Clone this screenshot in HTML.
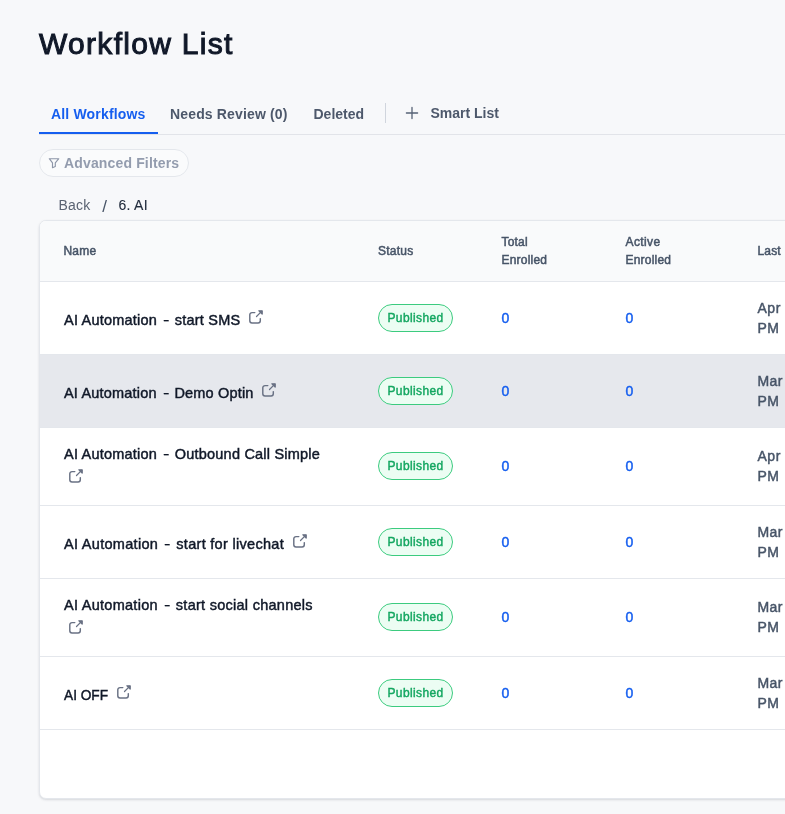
<!DOCTYPE html>
<html lang="en">
<head>
<meta charset="utf-8">
<title>Workflow List</title>
<style>
*{box-sizing:border-box;margin:0;padding:0}
html,body{width:785px;height:814px;overflow:hidden;background:#f7f8fa;font-family:"Liberation Sans",Arial,sans-serif;color:#101828}
body{position:relative}
#root{position:absolute;left:0;top:0;width:785px;height:814px;will-change:transform;transform:translateZ(0)}
.abs{position:absolute;white-space:nowrap}
h1{position:absolute;left:39px;top:26px;font-size:30px;line-height:36px;font-weight:400;color:#101828;letter-spacing:1.3px;-webkit-text-stroke:1px #101828;white-space:nowrap}
.tabs-line{position:absolute;left:39px;top:134px;width:746px;height:1px;background:#e2e4e9}
.tab-ul{position:absolute;left:39px;top:132px;width:119px;height:2px;background:#155eef}
.tab{position:absolute;top:104px;font-size:14px;line-height:20px;font-weight:700;color:#4d586b;white-space:nowrap}
.tab.active{color:#155eef}
.vsep{position:absolute;left:385px;top:103px;width:1px;height:20px;background:#d0d5dd}
.filter{position:absolute;left:39px;top:149px;width:150px;height:28px;border:1px solid #e4e7ec;border-radius:14px;background:#fafbfc}
.filter span{position:absolute;left:24px;top:3px;font-size:14px;line-height:20px;font-weight:700;color:#939cae;white-space:nowrap;letter-spacing:0.15px}
.filter svg{position:absolute;left:7px;top:6px}
.crumb{position:absolute;top:195px;font-size:14px;line-height:20px;color:#5a6372;white-space:nowrap}
.card{position:absolute;left:39px;top:220px;width:800px;height:579px;background:#fff;border:1px solid #e4e7ec;border-radius:7px;box-shadow:0 1px 3px rgba(16,24,40,.09),0 1px 2px rgba(16,24,40,.06);overflow:hidden}
.thead{position:absolute;left:0;top:0;width:100%;height:61px;background:#f9fafb;border-bottom:1px solid #e4e7ec}
.th{position:absolute;font-size:12px;line-height:18px;color:#475467;white-space:nowrap;-webkit-text-stroke:0.5px #475467}
.th span{display:block}
.row{position:absolute;left:0;width:100%;border-bottom:1px solid #e4e7ec}
.row.hl{background:#e6e8ed}
.name{position:absolute;left:24px;font-size:14.5px;line-height:20px;color:#101828;white-space:nowrap;-webkit-text-stroke:0.45px #101828}
.hy{display:inline-block;-webkit-text-stroke:0.15px #101828;transform:scaleX(1.35);margin:0 1.5px 0 2.8px}
.ext{position:absolute}
.badge{position:absolute;left:338px;width:75px;height:28px;border:1px solid #3ccb7f;border-radius:14px;background:#ecfdf3;color:#13a660;font-size:12px;line-height:26px;text-align:center;font-weight:400;-webkit-text-stroke:0.4px #13a660;letter-spacing:0.38px}
.num{position:absolute;font-size:14px;line-height:20px;color:#155eef;-webkit-text-stroke:0.45px #155eef}
.date{position:absolute;left:717.400px;font-size:14px;line-height:20px;color:#475467;white-space:nowrap;-webkit-text-stroke:0.45px #475467}
.date span{display:block}
</style>
</head>
<body>
<div id="root">
<h1>Workflow List</h1>
<div class="tab active" style="left:51px;letter-spacing:0.17px">All Workflows</div>
<div class="tab" style="left:170px;letter-spacing:0.15px">Needs Review (0)</div>
<div class="tab" style="left:313.500px">Deleted</div>
<div class="vsep"></div>
<svg class="abs" style="left:404px;top:105px" width="16" height="16" viewBox="0 0 16 16"><path d="M8 2.400v11.200M2.400 8h11.200" stroke="#566175" stroke-width="1.300" fill="none" stroke-linecap="round"/></svg>
<div class="tab" style="left:430.500px;top:103px">Smart List</div>
<div class="tabs-line"></div>
<div class="tab-ul"></div>
<div class="filter"><svg width="14" height="14" viewBox="0 0 14 14"><path d="M2.300 2.700H11.800L8.300 6.900V10.500L5.500 11.700V6.900Z" stroke="#8d96a8" stroke-width="1.150" fill="none" stroke-linejoin="round"/></svg><span>Advanced Filters</span></div>
<div class="crumb" style="left:58.500px;letter-spacing:0.25px">Back</div>
<div class="crumb" style="left:102.300px;top:196.500px;font-size:17px;color:#475467">/</div>
<div class="crumb" style="left:118.500px;color:#1f2a3b;-webkit-text-stroke:0.12px #1f2a3b;letter-spacing:0.25px">6. AI</div>
<div class="card">
 <div class="thead">
  <div class="th" style="left:23.5px;top:21px"><span style="letter-spacing:0.2px">Name</span></div>
  <div class="th" style="left:338px;top:21px"><span style="letter-spacing:0.25px">Status</span></div>
  <div class="th" style="left:461.5px;top:12px"><span style="letter-spacing:0.2px">Total</span><span style="letter-spacing:0.2px">Enrolled</span></div>
  <div class="th" style="left:585.5px;top:12px"><span style="letter-spacing:0.38px">Active</span><span style="letter-spacing:0.2px">Enrolled</span></div>
  <div class="th" style="left:717.5px;top:21px"><span style="letter-spacing:0.15px">Last</span></div>
 </div>
 <div class="row" style="top:61px;height:73px">
  <div class="name" style="top:28px;letter-spacing:0.211px">AI Automation <span class="hy">-</span> start SMS</div>
  <svg class="ext" style="left:207.95px;top:26.85px" width="16" height="16" viewBox="0 0 16 16" fill="none" stroke="#697184" stroke-linecap="round" stroke-linejoin="round"><path d="M6.800 3.600H4A2.200 2.200 0 0 0 1.800 5.800v6A2.200 2.200 0 0 0 4 14h6.100a2.200 2.200 0 0 0 2.200-2.200V9.600" stroke-width="1.450"/><path d="M8.500 7.500 13.600 2.400" stroke-width="1.250"/><path d="M10.900 1.800h3.300v3.300z" fill="#697184" stroke-width="1.300"/></svg>
  <div class="badge" style="top:22px">Published</div>
  <div class="num" style="left:461.500px;top:26px">0</div>
  <div class="num" style="left:585.500px;top:26px">0</div>
  <div class="date" style="top:16px"><span style="letter-spacing:0.6px">Apr</span><span style="letter-spacing:0.5px">PM</span></div>
 </div>
 <div class="row hl" style="top:134px;height:73px">
  <div class="name" style="top:28px;letter-spacing:0.182px">AI Automation <span class="hy">-</span> Demo Optin</div>
  <svg class="ext" style="left:220.85px;top:26.85px" width="16" height="16" viewBox="0 0 16 16" fill="none" stroke="#697184" stroke-linecap="round" stroke-linejoin="round"><path d="M6.800 3.600H4A2.200 2.200 0 0 0 1.800 5.800v6A2.200 2.200 0 0 0 4 14h6.100a2.200 2.200 0 0 0 2.200-2.200V9.600" stroke-width="1.450"/><path d="M8.500 7.500 13.600 2.400" stroke-width="1.250"/><path d="M10.900 1.800h3.300v3.300z" fill="#697184" stroke-width="1.300"/></svg>
  <div class="badge" style="top:22px">Published</div>
  <div class="num" style="left:461.500px;top:26px">0</div>
  <div class="num" style="left:585.500px;top:26px">0</div>
  <div class="date" style="top:16px"><span style="letter-spacing:0.4px">Mar</span><span style="letter-spacing:0.5px">PM</span></div>
 </div>
 <div class="row" style="top:207px;height:78px">
  <div class="name" style="top:16px;letter-spacing:0.208px">AI Automation <span class="hy">-</span> Outbound Call Simple</div>
  <svg class="ext" style="left:27.85px;top:39.85px" width="16" height="16" viewBox="0 0 16 16" fill="none" stroke="#697184" stroke-linecap="round" stroke-linejoin="round"><path d="M6.800 3.600H4A2.200 2.200 0 0 0 1.800 5.800v6A2.200 2.200 0 0 0 4 14h6.100a2.200 2.200 0 0 0 2.200-2.200V9.600" stroke-width="1.450"/><path d="M8.500 7.500 13.600 2.400" stroke-width="1.250"/><path d="M10.900 1.800h3.300v3.300z" fill="#697184" stroke-width="1.300"/></svg>
  <div class="badge" style="top:24px">Published</div>
  <div class="num" style="left:461.500px;top:28px">0</div>
  <div class="num" style="left:585.500px;top:28px">0</div>
  <div class="date" style="top:18px"><span style="letter-spacing:0.6px">Apr</span><span style="letter-spacing:0.5px">PM</span></div>
 </div>
 <div class="row" style="top:285px;height:73px">
  <div class="name" style="top:28px;letter-spacing:0.299px">AI Automation <span class="hy">-</span> start for livechat</div>
  <svg class="ext" style="left:251.95px;top:26.85px" width="16" height="16" viewBox="0 0 16 16" fill="none" stroke="#697184" stroke-linecap="round" stroke-linejoin="round"><path d="M6.800 3.600H4A2.200 2.200 0 0 0 1.800 5.800v6A2.200 2.200 0 0 0 4 14h6.100a2.200 2.200 0 0 0 2.200-2.200V9.600" stroke-width="1.450"/><path d="M8.500 7.500 13.600 2.400" stroke-width="1.250"/><path d="M10.900 1.800h3.300v3.300z" fill="#697184" stroke-width="1.300"/></svg>
  <div class="badge" style="top:22px">Published</div>
  <div class="num" style="left:461.500px;top:26px">0</div>
  <div class="num" style="left:585.500px;top:26px">0</div>
  <div class="date" style="top:16px"><span style="letter-spacing:0.4px">Mar</span><span style="letter-spacing:0.5px">PM</span></div>
 </div>
 <div class="row" style="top:358px;height:78px">
  <div class="name" style="top:16px;letter-spacing:0.271px">AI Automation <span class="hy">-</span> start social channels</div>
  <svg class="ext" style="left:27.85px;top:39.85px" width="16" height="16" viewBox="0 0 16 16" fill="none" stroke="#697184" stroke-linecap="round" stroke-linejoin="round"><path d="M6.800 3.600H4A2.200 2.200 0 0 0 1.800 5.800v6A2.200 2.200 0 0 0 4 14h6.100a2.200 2.200 0 0 0 2.200-2.200V9.600" stroke-width="1.450"/><path d="M8.500 7.500 13.600 2.400" stroke-width="1.250"/><path d="M10.900 1.800h3.300v3.300z" fill="#697184" stroke-width="1.300"/></svg>
  <div class="badge" style="top:24px">Published</div>
  <div class="num" style="left:461.500px;top:28px">0</div>
  <div class="num" style="left:585.500px;top:28px">0</div>
  <div class="date" style="top:18px"><span style="letter-spacing:0.4px">Mar</span><span style="letter-spacing:0.5px">PM</span></div>
 </div>
 <div class="row" style="top:436px;height:73px">
  <div class="name" style="top:28px;transform-origin:0 50%;transform:scaleX(0.9436)">AI OFF</div>
  <svg class="ext" style="left:75.75px;top:26.85px" width="16" height="16" viewBox="0 0 16 16" fill="none" stroke="#697184" stroke-linecap="round" stroke-linejoin="round"><path d="M6.800 3.600H4A2.200 2.200 0 0 0 1.800 5.800v6A2.200 2.200 0 0 0 4 14h6.100a2.200 2.200 0 0 0 2.200-2.200V9.600" stroke-width="1.450"/><path d="M8.500 7.500 13.600 2.400" stroke-width="1.250"/><path d="M10.900 1.800h3.300v3.300z" fill="#697184" stroke-width="1.300"/></svg>
  <div class="badge" style="top:22px">Published</div>
  <div class="num" style="left:461.500px;top:26px">0</div>
  <div class="num" style="left:585.500px;top:26px">0</div>
  <div class="date" style="top:16px"><span style="letter-spacing:0.4px">Mar</span><span style="letter-spacing:0.5px">PM</span></div>
 </div>
</div>
</div>
</body>
</html>
